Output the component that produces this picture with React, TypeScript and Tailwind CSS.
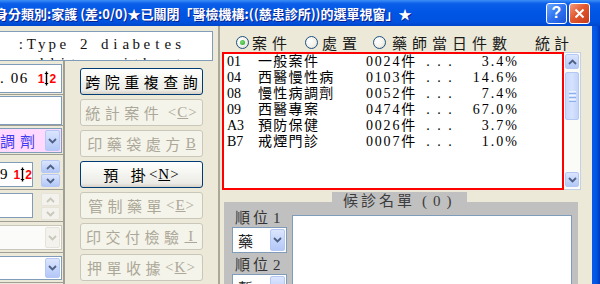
import React from "react";

const SERIF = "font-['Liberation_Serif','Noto_Sans_CJK_TC',serif]";

const Chev = ({ up = false, color = "#4d6185" }: { up?: boolean; color?: string }) => (
  <svg width="9" height="6" viewBox="0 0 9 6">
    <path d={up ? "M1 5 L4.5 1.5 L8 5" : "M1 1 L4.5 4.5 L8 1"} fill="none" stroke={color} strokeWidth="1.8" />
  </svg>
);

function DropBtn({ disabled = false }: { disabled?: boolean }) {
  return disabled ? (
    <div className="w-[15px] my-[1px] mr-[1px] rounded-[2px] border border-[#e6e4da] bg-[#f3f2ec] flex items-center justify-center">
      <Chev color="#c9c7ba" />
    </div>
  ) : (
    <div className="w-[15px] my-[1px] mr-[1px] rounded-[2px] border border-[#b4c7f5] bg-[linear-gradient(180deg,#dbe5fd_0%,#c6d6fb_50%,#b3c8f7_100%)] flex items-center justify-center">
      <Chev />
    </div>
  );
}

function SpinBtn({ up = false, disabled = false }: { up?: boolean; disabled?: boolean }) {
  return disabled ? (
    <div className="h-[13px] w-[19px] rounded-[2px] border border-[#e6e4da] bg-[#f3f2ec] flex items-center justify-center">
      <Chev up={up} color="#c9c7ba" />
    </div>
  ) : (
    <div className="h-[13px] w-[19px] rounded-[2px] border border-[#b4c7f5] bg-[linear-gradient(180deg,#dbe5fd_0%,#c6d6fb_50%,#b3c8f7_100%)] flex items-center justify-center">
      <Chev up={up} />
    </div>
  );
}

function RedTab() {
  return (
    <span className="inline-flex items-center font-['Liberation_Sans',sans-serif] font-bold text-[12px] text-[#ff0000] leading-none">
      <span>1</span>
      <svg width="5" height="15" viewBox="0 0 5 15">
        <path d="M2.5 0.5 V14.5" stroke="#000" strokeWidth="1.4" />
        <path d="M0.8 2.5 H4.2 M0.8 12.5 H4.2" stroke="#000" strokeWidth="1" />
      </svg>
      <span>2</span>
    </span>
  );
}

function Radio({ checked = false }: { checked?: boolean }) {
  return (
    <div className="w-[13px] h-[13px] rounded-full border border-[#1c5180] bg-[radial-gradient(circle_at_35%_35%,#ffffff_0%,#f2f1ea_55%,#d8d5c6_100%)] flex items-center justify-center">
      {checked && <div className="w-[5px] h-[5px] rounded-full bg-[radial-gradient(circle_at_40%_40%,#7be07b,#21a121)]" />}
    </div>
  );
}

function XPButton({ children, disabled = false }: { children: React.ReactNode; disabled?: boolean }) {
  return disabled ? (
    <div className="h-[27px] w-[123px] rounded-[3px] border border-[#c9c7ba] bg-[#f5f4ea] text-[#aca899] flex items-center justify-center text-[15px] leading-none whitespace-nowrap">
      {children}
    </div>
  ) : (
    <div className="h-[27px] w-[123px] rounded-[3px] border border-[#003c74] bg-[linear-gradient(180deg,#ffffff_0%,#f6f6f2_40%,#ecebe6_85%,#d6d0c5_100%)] text-black flex items-center justify-center text-[15px] leading-none whitespace-nowrap">
      {children}
    </div>
  );
}

const rows = [
  ["01", "一般案件", "0024", "3.4%"],
  ["04", "西醫慢性病", "0103", "14.6%"],
  ["08", "慢性病調劑", "0052", "7.4%"],
  ["09", "西醫專案", "0474", "67.0%"],
  ["A3", "預防保健", "0026", "3.7%"],
  ["B7", "戒煙門診", "0007", "1.0%"],
];

function Mono({ text }: { text: string }) {
  return (
    <>
      {Array.from(text).map((c, i) => (
        <span key={i} className="inline-block w-[10.5px] text-center">
          {c === " " ? "\u00a0" : c}
        </span>
      ))}
    </>
  );
}

function LeftPanel() {
  return (
    <div className="w-[218px] flex flex-col shrink-0">
      <div className="h-[35px] pt-[5px] flex">
        <div className={`ml-[-12px] w-[225px] h-[30px] bg-white border border-[#7f9db9] overflow-hidden pt-[4px] pl-[26.5px] text-[15px] leading-[16px] text-[#111] whitespace-nowrap ${SERIF}`}>
          <div><Mono text=":Type 2 diabetes" /></div>
          <div className="mt-[3px]"><Mono text="mellitus without complications" /></div>
        </div>
      </div>
      <div className="flex flex-1">
        <div className="w-[65px] border-r-2 border-[#a09f96] flex flex-col">
          {/* Row A */}
          <div className="h-[34px] border-b border-[#a09f96] pt-[3px]">
            <div className={`ml-[-10px] w-[72px] h-[29px] bg-white border border-[#7f9db9] flex items-center pl-[9px] text-[15px] text-black ${SERIF}`}>
              <span>.</span>
              <span className="ml-[7px] tracking-[1.5px]">06</span>
              <span className="ml-[9px] flex"><RedTab /></span>
            </div>
          </div>
          {/* Row B */}
          <div className="h-[31px] border-b border-[#a09f96] pt-[1px]">
            <div className="ml-[-10px] w-[72px] h-[29px] bg-white border border-[#7f9db9]" />
          </div>
          {/* Row C */}
          <div className="h-[29px] border-b border-[#a09f96] pt-[2px]">
            <div className="ml-[-10px] w-[72px] h-[25px] bg-[#ffd9ff] border border-[#7f9db9] flex">
              <div className="flex-1 flex items-center pl-[9px] text-[15px] tracking-[5px] text-[#3a3af0] leading-none">調劑</div>
              <DropBtn />
            </div>
          </div>
          {/* Row D */}
          <div className="h-[35px] border-b border-[#a09f96] pt-[5px] flex">
            <div className={`mt-[2px] ml-[-10px] w-[43px] h-[25px] bg-white border border-[#7f9db9] flex items-center pl-[9px] text-[15px] text-black ${SERIF}`}>
              <span>9</span>
              <span className="ml-[6px] flex"><RedTab /></span>
            </div>
            <div className="ml-[8px] flex flex-col gap-[1px]">
              <SpinBtn up />
              <SpinBtn />
            </div>
          </div>
          {/* Row E */}
          <div className="h-[32px] border-b border-[#a09f96] pt-[3px] flex">
            <div className="ml-[-10px] w-[43px] h-[25px] bg-white border border-[#7f9db9]" />
            <div className="ml-[8px] flex flex-col gap-[1px]">
              <SpinBtn up disabled />
              <SpinBtn disabled />
            </div>
          </div>
          {/* Row F */}
          <div className="h-[31px] border-b border-[#a09f96] pt-[3px]">
            <div className="ml-[-10px] w-[72px] h-[25px] bg-[#fbfbf9] border border-[#c9c7ba] flex">
              <div className="flex-1" />
              <DropBtn disabled />
            </div>
          </div>
          {/* Row G */}
          <div className="h-[30px] border-b border-[#a09f96] pt-[3px]">
            <div className="ml-[-10px] w-[72px] h-[24px] bg-white border border-[#7f9db9] flex">
              <div className="flex-1" />
              <DropBtn />
            </div>
          </div>
        </div>
        <div className="pl-[15px] pt-[7px] flex flex-col gap-[4px]">
          <XPButton>
            <span className="tracking-[4.5px] mr-[-4.5px]">跨院重複查詢</span>
          </XPButton>
          <XPButton disabled>
            <span className="tracking-[4.5px] mr-[4.5px]">統計案件</span>
            <span className={`${SERIF} tracking-[1px]`}>&lt;<u>C</u>&gt;</span>
          </XPButton>
          <XPButton disabled>
            <span className="tracking-[4.5px]">印藥袋處方</span>
            <span className={`${SERIF} ml-[1px]`}><u>B</u></span>
          </XPButton>
          <XPButton>
            <span className="tracking-[4.5px]">預</span>
            <span className="ml-[8px]">掛</span>
            <span className={`${SERIF} tracking-[1px] ml-[3px]`}>&lt;<u>N</u>&gt;</span>
          </XPButton>
          <XPButton disabled>
            <span className="tracking-[4.5px]">管制藥單</span>
            <span className={`${SERIF} tracking-[1px]`}>&lt;<u>E</u>&gt;</span>
          </XPButton>
          <XPButton disabled>
            <span className="tracking-[4.5px]">印交付檢驗</span>
            <span className={`${SERIF} ml-[1px]`}><u>&nbsp;I&nbsp;</u></span>
          </XPButton>
          <XPButton disabled>
            <span className="tracking-[4.5px]">押單收據</span>
            <span className={`${SERIF} tracking-[1px]`}>&lt;<u>K</u>&gt;</span>
          </XPButton>
        </div>
      </div>
    </div>
  );
}

function Scrollbar() {
  return (
    <div className="w-[17px] h-[138px] flex flex-col bg-[#fbfbf8] border-y border-r border-[#c3d0e6] pt-[1px] pb-[2px] px-[1px]">
      <div className="h-[15px] rounded-[2px] border border-[#b4c7f5] bg-[linear-gradient(180deg,#dbe5fd_0%,#c6d6fb_50%,#b3c8f7_100%)] flex items-center justify-center">
        <Chev up />
      </div>
      <div className="mt-[3px] h-[48px] rounded-[2px] border border-[#b4c7f5] bg-[linear-gradient(90deg,#c9d8fc_0%,#d6e2fd_50%,#c3d4fb_100%)] flex flex-col items-center justify-center gap-[1px]">
        <div className="w-[7px] h-[1px] bg-[#eef4fe]" />
        <div className="w-[7px] h-[1px] bg-[#8fb0f0]" />
        <div className="w-[7px] h-[1px] bg-[#eef4fe]" />
        <div className="w-[7px] h-[1px] bg-[#8fb0f0]" />
        <div className="w-[7px] h-[1px] bg-[#eef4fe]" />
        <div className="w-[7px] h-[1px] bg-[#8fb0f0]" />
      </div>
      <div className="flex-1" />
      <div className="h-[15px] rounded-[2px] border border-[#b4c7f5] bg-[linear-gradient(180deg,#dbe5fd_0%,#c6d6fb_50%,#b3c8f7_100%)] flex items-center justify-center">
        <Chev />
      </div>
    </div>
  );
}

function RightPanel() {
  return (
    <div className="flex-1 flex flex-col min-w-0">
      <div className="h-[26px] pt-[6px] flex items-center text-[15px] text-[#1a1a1a] leading-none whitespace-nowrap">
        <div className="ml-[16px]"><Radio checked /></div>
        <span className="ml-[3px] tracking-[5px]">案件</span>
        <div className="ml-[13px]"><Radio /></div>
        <span className="ml-[4px] tracking-[5px]">處置</span>
        <div className="ml-[11px]"><Radio /></div>
        <span className="ml-[6px] tracking-[5px]">藥師當日件數</span>
        <span className="ml-[23px] tracking-[4px]">統計</span>
      </div>
      <div className="flex ml-[2px] h-[138px]">
        <div className="w-[342px] h-[138px] border-2 border-[#ff0000] bg-white overflow-hidden">
          {rows.map((r) => (
            <div key={r[0]} className={`h-[16px] flex items-center text-[14px] leading-none text-black whitespace-nowrap ${SERIF}`}>
              <span className="w-[34px] pl-[3px]">{r[0]}</span>
              <span className="w-[108px] tracking-[1.3px]">{r[1]}</span>
              <span className="tracking-[1.8px]">{r[2]}</span>
              <span>件</span>
              <span className="ml-[11px] tracking-[7.5px]">...</span>
              <span className="flex-1 text-right pr-[43px] tracking-[2px]">{r[3]}</span>
            </div>
          ))}
        </div>
        <Scrollbar />
      </div>
      <div className="ml-[4px] w-[354px] mt-[2px] block">
        <div className="ml-[108px] w-[135px] h-[10px] bg-[#c0c0c0] text-[15px] leading-[16px] text-[#3c3c3c] whitespace-nowrap pl-[11px]">
          <span className="tracking-[3px]">候診名單</span>
          <span className={`${SERIF} ml-[7px] tracking-[6px]`}>(0)</span>
        </div>
        <div className="h-[82px] bg-[#c0c0c0] flex items-start pl-[8px] pr-[6px] pt-[7px] overflow-hidden">
          <div className="w-[55px] flex flex-col">
            <div className="h-[16px] pl-[3px] text-[15px] leading-[16px] text-[#333] whitespace-nowrap">
              <span className="tracking-[3px]">順位</span>
              <span className={`${SERIF} ml-[2px]`}>1</span>
            </div>
            <div className="mt-[2px] h-[26px] w-[55px] bg-white border border-[#7f9db9] flex">
              <div className="flex-1 flex items-center pl-[5px] text-[15px] leading-none text-[#222]">藥</div>
              <DropBtn />
            </div>
            <div className="mt-[3px] h-[16px] pl-[3px] text-[15px] leading-[16px] text-[#333] whitespace-nowrap">
              <span className="tracking-[3px]">順位</span>
              <span className={`${SERIF} ml-[2px]`}>2</span>
            </div>
            <div className="mt-[2px] h-[26px] w-[55px] bg-white border border-[#7f9db9] flex">
              <div className="flex-1 flex items-center pl-[5px] text-[15px] leading-none text-[#222]">暫</div>
              <DropBtn />
            </div>
          </div>
          <div className="ml-[5px] mt-[6px] flex-1 h-[120px] bg-white border border-[#7f9db9]" />
        </div>
      </div>
    </div>
  );
}

export default function App() {
  return (
    <div className="w-[600px] h-[284px] overflow-hidden bg-[#ece9d8] flex flex-col font-['Noto_Sans_CJK_TC','Noto_Sans_CJK_SC',sans-serif]">
      <div className="h-[26px] shrink-0 flex items-center bg-[linear-gradient(180deg,#3d8ff6_0%,#0a5ee9_14%,#0055e5_50%,#0052de_85%,#0046ca_100%)]">
        <div className="ml-[-5px] text-white font-bold text-[13px] leading-none whitespace-nowrap [text-shadow:1px_1px_0_#0c1f8f]">
          身分類別:家護 (差:0/0)★已關閉「醫檢機構:((慈患診所))的選單視窗」★
        </div>
        <div className="ml-auto mr-[10px] flex gap-[2px]">
          <div className="w-[21px] h-[21px] rounded-[3px] border border-white bg-[linear-gradient(135deg,#6aa6ff_0%,#2f73f2_50%,#1b56d8_100%)] flex items-center justify-center text-white font-bold text-[16px] leading-none font-['Liberation_Sans',sans-serif]">
            ?
          </div>
          <div className="w-[21px] h-[21px] rounded-[3px] border border-white bg-[linear-gradient(135deg,#f29a7c_0%,#e2582f_45%,#c73c19_100%)] flex items-center justify-center">
            <svg width="11" height="11" viewBox="0 0 11 11">
              <path d="M1.5 1.5 L9.5 9.5 M9.5 1.5 L1.5 9.5" stroke="#fff" strokeWidth="2" />
            </svg>
          </div>
        </div>
      </div>
      <div className="flex flex-1 min-h-0">
        <div className="w-[592px] flex min-w-0">
          <LeftPanel />
          <div className="w-[2px] bg-[#aca899]" />
          <RightPanel />
        </div>
        <div className="w-[8px] bg-[linear-gradient(90deg,#0a5ae8_0%,#0055e5_55%,#0036b8_100%)]" />
      </div>
    </div>
  );
}
